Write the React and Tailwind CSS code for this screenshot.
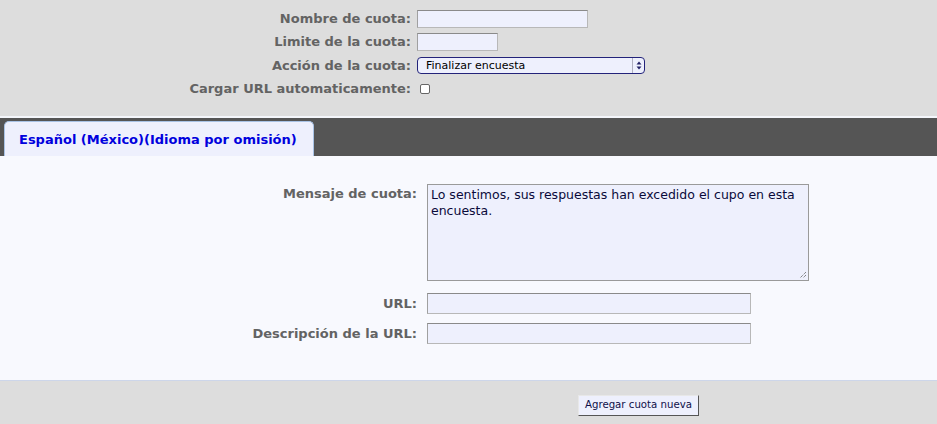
import React from "react";

const font = { fontFamily: '"DejaVu Sans", Verdana, sans-serif' };

function Label({ children }) {
  return (
    <div className="text-right font-bold text-[13px] text-[#636363] leading-none whitespace-nowrap">{children}</div>
  );
}

function TextInput({ w, h = "h-[18px]" }) {
  return (
    <div
      className={`${w} ${h} bg-[#eef0fd] border border-[#b8b8b8] border-t-[#8a8a8a] border-l-[#a0a0a0]`}
    />
  );
}

export default function App() {
  return (
    <div style={font} className="w-[937px] h-[424px] bg-[#dddddd] overflow-hidden flex flex-col">
      {/* top form */}
      <div className="pt-[7px] h-[116px] grid grid-cols-[411px_1fr] auto-rows-[23.3px] gap-x-[6px] items-center">
        <Label>Nombre de cuota:</Label>
        <TextInput w="w-[171px]" />
        <Label>Limite de la cuota:</Label>
        <TextInput w="w-[81px]" />
        <Label>Acción de la cuota:</Label>
        <div className="w-[228px] h-[17px] rounded-[4px] border border-[#23237a] bg-[#eef0fd] flex items-center">
          <span className="flex-1 pl-[8px] text-[11px] text-black leading-none">Finalizar encuesta</span>
          <div className="w-[12px] h-full border-l border-[#b0b0c0] flex items-center justify-center">
            <svg width="6" height="9" viewBox="0 0 6 9">
              <path d="M3 0.5 L5.5 3.5 H0.5 Z" fill="#222266" />
              <path d="M3 8.5 L5.5 5.5 H0.5 Z" fill="#222266" />
            </svg>
          </div>
        </div>
        <Label>Cargar URL automaticamente:</Label>
        <div className="pl-[3px] flex items-center">
          <div className="w-[10px] h-[10px] rounded-[2px] border border-[#666] bg-white" />
        </div>
      </div>
      <div className="h-[2px] bg-[#f4f6fb]" />
      {/* tab bar */}
      <div className="h-[38px] bg-[#555555] flex items-end pl-[4px]">
        <div className="h-[35px] w-[310px] rounded-t-[5px] border border-b-0 border-[#a9c3e6] bg-[#eef0fd] flex items-center pl-[14px]">
          <span className="font-bold text-[13px] text-[#0000dd] leading-none whitespace-nowrap">Español (México)(Idioma por omisión)</span>
        </div>
      </div>
      {/* content */}
      <div className="h-[225px] bg-[#f8f9fe] border-b border-[#cdd6ea] pt-[28px] grid grid-cols-[417px_1fr] gap-x-[10px] content-start">
        <div className="pt-[3px]">
          <Label>Mensaje de cuota:</Label>
        </div>
        <div className="relative w-[382px] h-[97px] bg-[#eef0fd] border border-[#9a9a9a]">
          <div className="px-[3px] pt-[2px] text-[12.5px] leading-[16px] text-[#0a0a3a]">
            Lo sentimos, sus respuestas han excedido el cupo en esta encuesta.
          </div>
          <svg className="absolute right-[1px] bottom-[1px]" width="8" height="8" viewBox="0 0 8 8">
            <path d="M7 1 L1 7 M7 4 L4 7" stroke="#555" strokeWidth="1" strokeDasharray="1 1" />
          </svg>
        </div>
        <div className="col-span-2 h-[12px]" />
        <div className="flex items-center justify-end h-[21px]">
          <Label>URL:</Label>
        </div>
        <TextInput w="w-[324px]" h="h-[21px]" />
        <div className="col-span-2 h-[9px]" />
        <div className="flex items-center justify-end h-[21px]">
          <Label>Descripción de la URL:</Label>
        </div>
        <TextInput w="w-[324px]" h="h-[21px]" />
      </div>
      {/* bottom */}
      <div className="pt-[14px] pl-[578px]">
        <button className="w-[121px] h-[21px] p-0 flex items-center justify-center bg-[#eef0fd] border border-[#e8e8e8] border-r-[#555] border-b-[#555] text-[10.2px] text-[#10104a] leading-none whitespace-nowrap">
          Agregar cuota nueva
        </button>
      </div>
    </div>
  );
}
